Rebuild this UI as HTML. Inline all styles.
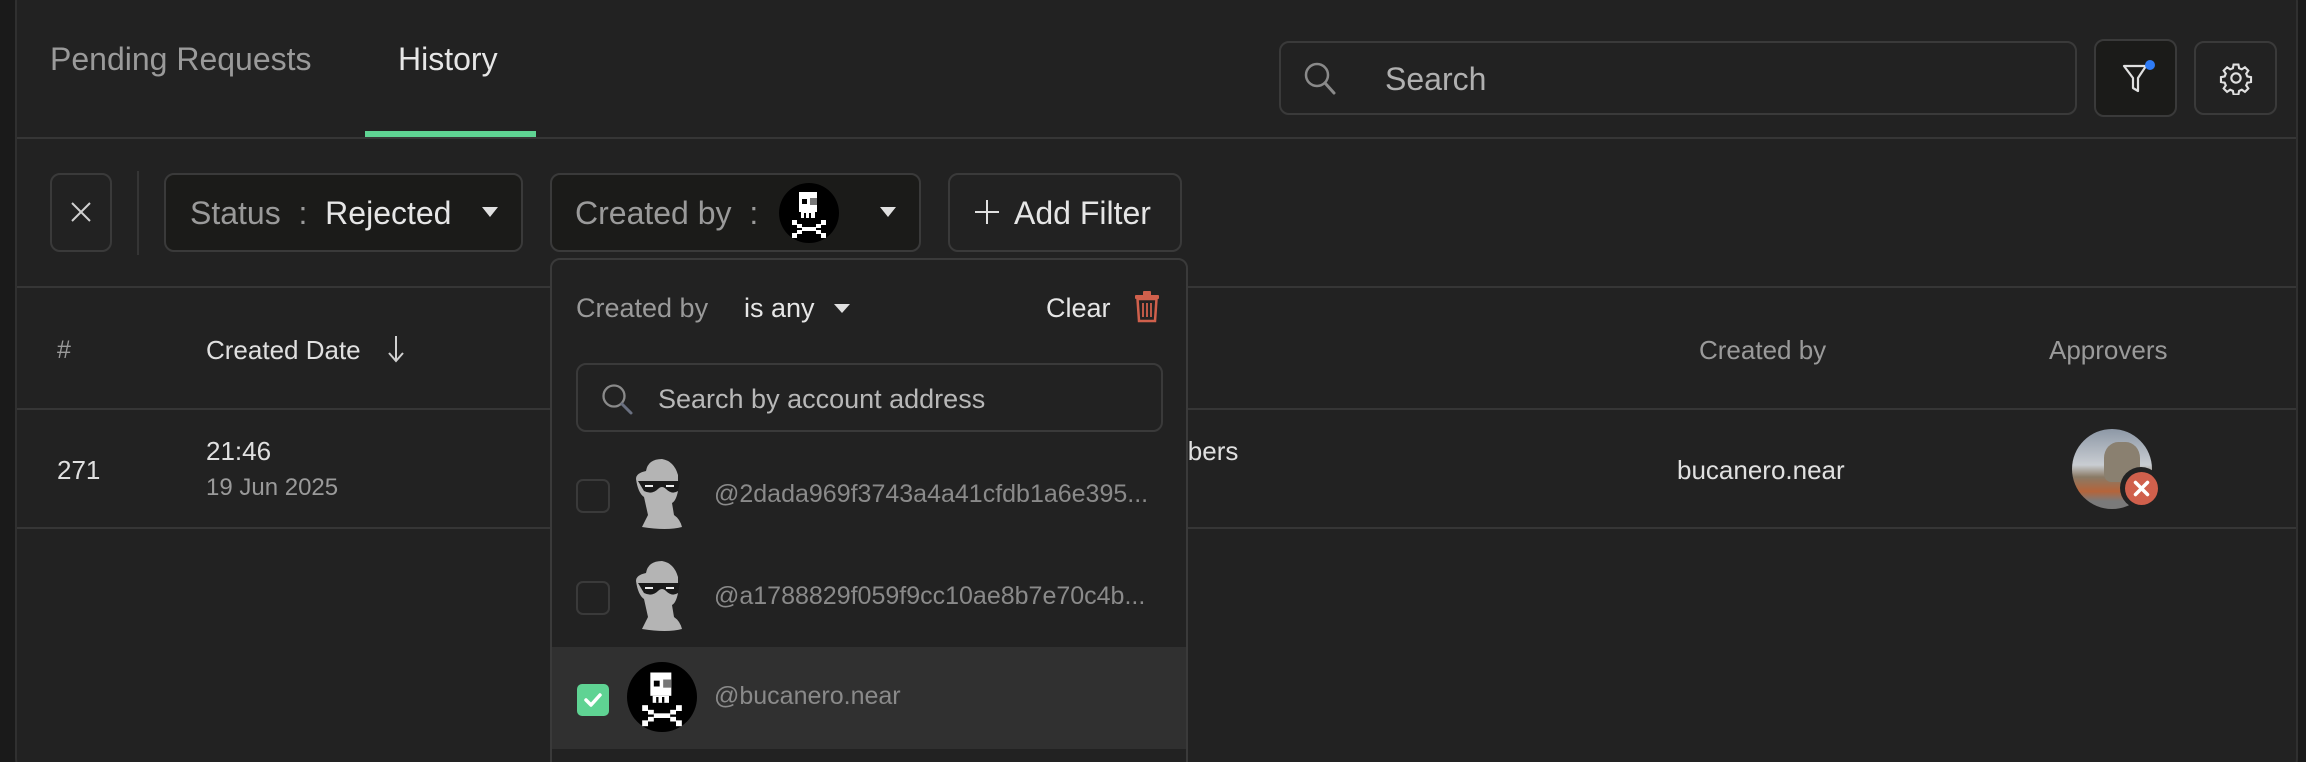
<!DOCTYPE html>
<html><head><meta charset="utf-8"><style>
*{box-sizing:border-box;margin:0;padding:0}
html,body{width:2306px;height:762px;overflow:hidden}
body{background:#1a1a1a;font-family:"Liberation Sans",sans-serif;position:relative}
.a{position:absolute}
.card{left:15px;top:-20px;width:2283px;height:800px;background:#222222;border:2px solid #303030;border-radius:22px}
.hl{height:2px;background:#363636}
.btn{border:2px solid #3a3a3a;border-radius:10px}
.t{white-space:nowrap;line-height:1}
</style></head><body>
<div class="a card"></div>
<!-- tabs -->
<div class="a t" style="left:50px;top:43px;font-size:32px;color:#9a9a9a">Pending Requests</div>
<div class="a t" style="left:398px;top:43px;font-size:32px;color:#e6e6e6">History</div>
<div class="a" style="left:365px;top:131px;width:171px;height:6px;background:#5fd393"></div>
<div class="a hl" style="left:17px;top:137px;width:2279px"></div>
<!-- search -->
<div class="a btn" style="left:1279px;top:41px;width:798px;height:74px"></div>
<svg class="a" style="left:1302px;top:60px" width="36" height="36" viewBox="0 0 36 36"><circle cx="15" cy="15" r="11" fill="none" stroke="#8a8a8a" stroke-width="2.5"/><path d="M23 23l9 10" stroke="#8a8a8a" stroke-width="3" stroke-linecap="round"/></svg>
<div class="a t" style="left:1385px;top:63px;font-size:32px;color:#b0b0b0">Search</div>
<div class="a btn" style="left:2094px;top:39px;width:83px;height:78px;background:#1b1b19"></div>
<svg class="a" style="left:2120px;top:60px" width="36" height="36" viewBox="0 0 36 36"><path d="M4 6h22l-8 12v13l-5-3V18z" fill="none" stroke="#e0e0e0" stroke-width="2.2" stroke-linejoin="round"/><circle cx="30" cy="5" r="5" fill="#2f7cf6"/></svg>
<div class="a btn" style="left:2194px;top:41px;width:83px;height:74px"></div>
<svg class="a" style="left:2219px;top:61px" width="34" height="34" viewBox="0 0 24 24"><path fill="none" stroke="#e0e0e0" stroke-width="1.5" d="M10.3 2.5h3.4l.5 2.6 1.9.8 2.2-1.5 2.4 2.4-1.5 2.2.8 1.9 2.6.5v3.4l-2.6.5-.8 1.9 1.5 2.2-2.4 2.4-2.2-1.5-1.9.8-.5 2.6h-3.4l-.5-2.6-1.9-.8-2.2 1.5-2.4-2.4 1.5-2.2-.8-1.9-2.6-.5v-3.4l2.6-.5.8-1.9-1.5-2.2 2.4-2.4 2.2 1.5 1.9-.8z"/><circle cx="12" cy="12" r="3.3" fill="none" stroke="#e0e0e0" stroke-width="1.5"/></svg>
<!-- filter row -->
<div class="a btn" style="left:50px;top:173px;width:62px;height:79px"></div>
<svg class="a" style="left:69px;top:200px" width="24" height="24"><path d="M3 3l18 18M21 3L3 21" stroke="#d0d0d0" stroke-width="2"/></svg>
<div class="a" style="left:137px;top:171px;width:2px;height:84px;background:#353535"></div>
<div class="a btn" style="left:164px;top:173px;width:359px;height:79px;background:#1b1b19"></div>
<div class="a t" style="left:190px;top:197px;font-size:32px;color:#9a9a9a">Status &nbsp;:&nbsp; <span style="color:#e6e6e6">Rejected</span></div>
<div class="a" style="left:482px;top:207px;border-left:8px solid transparent;border-right:8px solid transparent;border-top:10px solid #e0e0e0"></div>
<div class="a btn" style="left:550px;top:173px;width:371px;height:79px;background:#1b1b19"></div>
<div class="a t" style="left:575px;top:197px;font-size:32px;color:#9a9a9a">Created by &nbsp;:</div>
<svg class="a" style="left:779px;top:183px" width="60" height="60" viewBox="0 0 60 60"><circle cx="30" cy="30" r="30" fill="#000"/><g fill="#fff"><rect x="20" y="9" width="18" height="20"/><rect x="22" y="29" width="14" height="6"/><rect x="13" y="37" width="5" height="5"/><rect x="42" y="37" width="5" height="5"/><rect x="18" y="41" width="5" height="4"/><rect x="37" y="41" width="5" height="4"/><rect x="23" y="44" width="14" height="4"/><rect x="18" y="47" width="5" height="4"/><rect x="37" y="47" width="5" height="4"/><rect x="13" y="50" width="5" height="5"/><rect x="42" y="50" width="5" height="5"/></g><g fill="#000"><rect x="23" y="16" width="5" height="5"/><rect x="31" y="15" width="7" height="7" fill="#777"/><rect x="25" y="30" width="2" height="5"/><rect x="30" y="30" width="2" height="5"/></g></svg>
<div class="a" style="left:880px;top:207px;border-left:8px solid transparent;border-right:8px solid transparent;border-top:10px solid #e0e0e0"></div>
<div class="a btn" style="left:948px;top:173px;width:234px;height:79px"></div>
<svg class="a" style="left:974px;top:199px" width="26" height="26"><path d="M13 1v24M1 13h24" stroke="#e0e0e0" stroke-width="2"/></svg>
<div class="a t" style="left:1014px;top:197px;font-size:32px;color:#e6e6e6">Add Filter</div>
<div class="a hl" style="left:17px;top:286px;width:2279px"></div>
<!-- table -->
<div class="a t" style="left:57px;top:338px;font-size:25px;color:#9a9a9a">#</div>
<div class="a t" style="left:206px;top:337px;font-size:26px;color:#e0e0e0">Created Date</div>
<svg class="a" style="left:386px;top:334px" width="20" height="30"><path d="M10 2v25M3 19l7 8 7-8" fill="none" stroke="#d0d0d0" stroke-width="2"/></svg>
<div class="a t" style="left:1699px;top:337px;font-size:26px;color:#9a9a9a">Created by</div>
<div class="a t" style="left:2049px;top:337px;font-size:26px;color:#9a9a9a">Approvers</div>
<div class="a hl" style="left:17px;top:408px;width:2279px"></div>
<div class="a t" style="left:57px;top:457px;font-size:26px;color:#e0e0e0">271</div>
<div class="a t" style="left:206px;top:438px;font-size:26px;color:#e0e0e0">21:46</div>
<div class="a t" style="left:206px;top:476px;font-size:24px;color:#9a9a9a">19 Jun 2025</div>
<div class="a t" style="left:1130px;top:438px;font-size:26px;color:#e0e0e0">Members</div>
<div class="a t" style="left:1677px;top:457px;font-size:26px;color:#e0e0e0">bucanero.near</div>
<div class="a" style="left:2072px;top:429px;width:80px;height:80px;border-radius:50%;background:linear-gradient(180deg,#8d98a6 0%,#c9cdd2 45%,#8a7a66 60%,#b5643a 78%,#7a7a7a 90%)"></div>
<div class="a" style="left:2104px;top:442px;width:36px;height:40px;border-radius:40% 40% 20% 20%;background:#8a8070"></div>
<div class="a" style="left:2120px;top:467px;width:42px;height:42px;border-radius:50%;background:#222"></div>
<svg class="a" style="left:2125px;top:472px" width="33" height="33"><circle cx="16.5" cy="16.5" r="16.5" fill="#d0604c"/><path d="M10.5 10.5l12 12M22.5 10.5l-12 12" stroke="#fff" stroke-width="3.5" stroke-linecap="round"/></svg>
<div class="a hl" style="left:17px;top:527px;width:2279px"></div>
<!-- dropdown -->
<div class="a" style="left:550px;top:258px;width:638px;height:540px;background:#222;border:2px solid #3a3a3a;border-radius:10px;overflow:hidden">
 <div class="a" style="left:0;top:387px;width:636px;height:102px;background:#303030"></div>
</div>
<div class="a t" style="left:576px;top:295px;font-size:27px;color:#9a9a9a">Created by</div>
<div class="a t" style="left:744px;top:295px;font-size:27px;color:#e6e6e6">is any</div>
<div class="a" style="left:834px;top:304px;border-left:8px solid transparent;border-right:8px solid transparent;border-top:9px solid #e0e0e0"></div>
<div class="a t" style="left:1046px;top:295px;font-size:27px;color:#e6e6e6">Clear</div>
<svg class="a" style="left:1133px;top:290px" width="28" height="33" viewBox="0 0 28 33"><rect x="2" y="5" width="24" height="4" rx="1" fill="#d0604c"/><rect x="10" y="1" width="8" height="5" rx="1" fill="#d0604c"/><path d="M4.5 9h19l-1.5 22H6z" fill="none" stroke="#d0604c" stroke-width="2.5"/><path d="M10 13v14M14 13v14M18 13v14" stroke="#d0604c" stroke-width="1.8"/></svg>
<div class="a btn" style="left:576px;top:363px;width:587px;height:69px"></div>
<svg class="a" style="left:600px;top:382px" width="34" height="34"><circle cx="14" cy="14" r="10.5" fill="none" stroke="#8a8a8a" stroke-width="2.3"/><path d="M22 22l9 9" stroke="#6a7080" stroke-width="3" stroke-linecap="round"/></svg>
<div class="a t" style="left:658px;top:386px;font-size:27px;color:#b8b8b8">Search by account address</div>
<!-- rows -->
<div class="a btn" style="left:576px;top:479px;width:34px;height:34px;border-radius:7px"></div>
<div class="a btn" style="left:576px;top:581px;width:34px;height:34px;border-radius:7px"></div>
<div class="a" style="left:577px;top:684px;width:32px;height:32px;border-radius:5px;background:#5fd393"></div>
<svg class="a" style="left:582px;top:689px" width="22" height="22"><path d="M4 11l5 5 9-10" fill="none" stroke="#fff" stroke-width="3.5" stroke-linecap="round" stroke-linejoin="round"/></svg>
<svg class="a" style="left:632px;top:457px" width="60" height="72" viewBox="0 0 60 72"><path d="M14 14 Q16 2 30 2 Q42 4 46 18 L46 34 Q44 44 40 46 L42 58 Q48 62 50 70 Q35 74 10 70 Q14 62 16 58 L12 40 Q6 36 4 22 Q4 16 14 14Z" fill="#b4b4b4"/><path d="M6 24 H48 L46 34 Q40 38 34 32 Q30 28 26 32 Q20 38 12 34 Z" fill="#1a1a1a"/><path d="M13 29h8M34 29h8" stroke="#eee" stroke-width="2"/></svg>
<svg class="a" style="left:632px;top:559px" width="60" height="72" viewBox="0 0 60 72"><path d="M14 14 Q16 2 30 2 Q42 4 46 18 L46 34 Q44 44 40 46 L42 58 Q48 62 50 70 Q35 74 10 70 Q14 62 16 58 L12 40 Q6 36 4 22 Q4 16 14 14Z" fill="#b4b4b4"/><path d="M6 24 H48 L46 34 Q40 38 34 32 Q30 28 26 32 Q20 38 12 34 Z" fill="#1a1a1a"/><path d="M13 29h8M34 29h8" stroke="#eee" stroke-width="2"/></svg>
<svg class="a" style="left:627px;top:662px" width="70" height="70" viewBox="0 0 60 60"><circle cx="30" cy="30" r="30" fill="#000"/><g fill="#fff"><rect x="20" y="9" width="18" height="20"/><rect x="22" y="29" width="14" height="6"/><rect x="13" y="37" width="5" height="5"/><rect x="42" y="37" width="5" height="5"/><rect x="18" y="41" width="5" height="4"/><rect x="37" y="41" width="5" height="4"/><rect x="23" y="44" width="14" height="4"/><rect x="18" y="47" width="5" height="4"/><rect x="37" y="47" width="5" height="4"/><rect x="13" y="50" width="5" height="5"/><rect x="42" y="50" width="5" height="5"/></g><g fill="#000"><rect x="23" y="16" width="5" height="5"/><rect x="31" y="15" width="7" height="7" fill="#777"/><rect x="25" y="30" width="2" height="5"/><rect x="30" y="30" width="2" height="5"/></g></svg>
<div class="a t" style="left:714px;top:482px;font-size:25px;color:#8a8a8a">@2dada969f3743a4a41cfdb1a6e395...</div>
<div class="a t" style="left:714px;top:584px;font-size:25px;color:#8a8a8a">@a1788829f059f9cc10ae8b7e70c4b...</div>
<div class="a t" style="left:714px;top:684px;font-size:25px;color:#8a8a8a">@bucanero.near</div>
</body></html>
